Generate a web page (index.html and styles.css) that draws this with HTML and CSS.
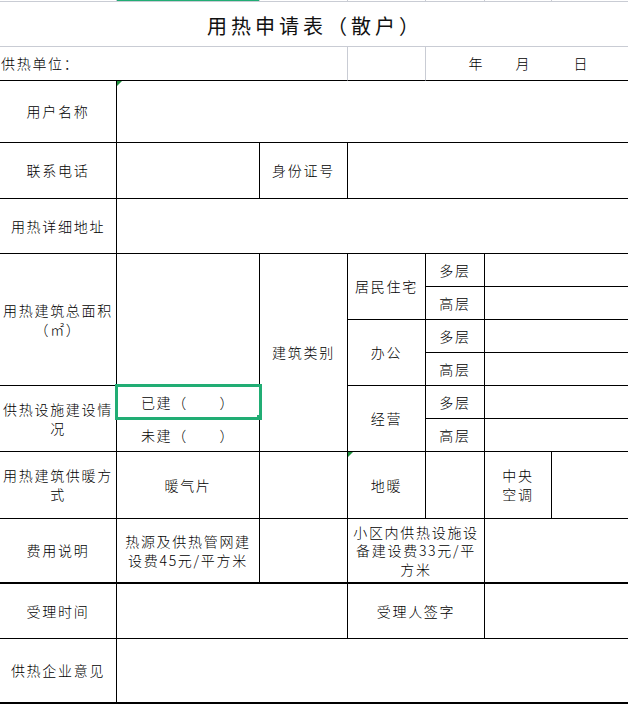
FILE: index.html
```html
<!DOCTYPE html>
<html lang="zh-CN">
<head>
<meta charset="utf-8">
<title>用热申请表（散户）</title>
<link rel="stylesheet" href="styles.css">
</head>
<body>
<table class="sheet">
  <colgroup>
    <col class="c-a"><col class="c-b"><col class="c-c"><col class="c-d"><col class="c-e"><col class="c-f"><col class="c-g">
  </colgroup>
  <tbody>
    <tr class="h-strip">
      <td class="strip"></td><td class="strip strip-sel"></td><td class="strip"></td><td class="strip"></td><td class="strip"></td><td class="strip"></td><td class="strip end"></td>
    </tr>
    <tr class="h-title">
      <td colspan="7" class="title end">用热申请表（散户）</td>
    </tr>
    <tr class="h-unit">
      <td colspan="3" class="unit">供热单位：</td>
      <td class="unit-mid"></td>
      <td colspan="3" class="unit-date end"><div class="date"><span class="d-year">年</span><span class="d-month">月</span><span class="d-day">日</span></div></td>
    </tr>
    <tr class="h-name">
      <td>用户名称</td>
      <td colspan="6" class="end flag"></td>
    </tr>
    <tr class="h-phone">
      <td>联系电话</td>
      <td></td>
      <td>身份证号</td>
      <td colspan="4" class="end"></td>
    </tr>
    <tr class="h-addr">
      <td>用热详细地址</td>
      <td colspan="6" class="end"></td>
    </tr>
    <tr class="h-sub">
      <td rowspan="4">用热建筑总面积<br>（㎡）</td>
      <td rowspan="4"></td>
      <td rowspan="6">建筑类别</td>
      <td rowspan="2">居民住宅</td>
      <td>多层</td>
      <td colspan="2" class="end"></td>
    </tr>
    <tr class="h-sub">
      <td>高层</td>
      <td colspan="2" class="end"></td>
    </tr>
    <tr class="h-sub">
      <td rowspan="2">办公</td>
      <td>多层</td>
      <td colspan="2" class="end"></td>
    </tr>
    <tr class="h-sub">
      <td>高层</td>
      <td colspan="2" class="end"></td>
    </tr>
    <tr class="h-sub">
      <td rowspan="2">供热设施建设情<br>况</td>
      <td class="sel">已建（　　）</td>
      <td rowspan="2">经营</td>
      <td>多层</td>
      <td colspan="2" class="end"></td>
    </tr>
    <tr class="h-sub">
      <td>未建（　　）</td>
      <td>高层</td>
      <td colspan="2" class="end"></td>
    </tr>
    <tr class="h-heat">
      <td>用热建筑供暖方<br>式</td>
      <td>暖气片</td>
      <td></td>
      <td class="flag">地暖</td>
      <td></td>
      <td>中央<br>空调</td>
      <td class="end"></td>
    </tr>
    <tr class="h-fee">
      <td class="thick">费用说明</td>
      <td class="thick">热源及供热管网建<br>设费45元/平方米</td>
      <td class="thick"></td>
      <td colspan="2" class="thick tight">小区内供热设施设<br>备建设费33元/平<br>方米</td>
      <td colspan="2" class="thick end"></td>
    </tr>
    <tr class="h-accept">
      <td>受理时间</td>
      <td colspan="2"></td>
      <td colspan="2">受理人签字</td>
      <td colspan="2" class="end"></td>
    </tr>
    <tr class="h-opinion">
      <td class="thick">供热企业意见</td>
      <td colspan="6" class="thick end"></td>
    </tr>
  </tbody>
</table>
</body>
</html>
```

FILE: styles.css
```css
* { box-sizing: border-box; }

html, body {
  margin: 0;
  padding: 0;
  background: #ffffff;
}

body {
  width: 628px;
  height: 704px;
  overflow: hidden;
  font-family: "Noto Sans CJK SC", "Noto Sans", sans-serif;
  font-size: 14px;
  font-weight: 300;
  color: #000000;
}

.sheet {
  border-collapse: separate;
  border-spacing: 0;
  table-layout: fixed;
  width: 628px;
}

.c-a { width: 117px; }
.c-b { width: 143px; }
.c-c { width: 88px; }
.c-d { width: 78px; }
.c-e { width: 59px; }
.c-f { width: 67px; }
.c-g { width: 76px; }

.sheet td {
  padding: 0;
  border-right: 1px solid #000000;
  border-bottom: 1px solid #000000;
  text-align: center;
  vertical-align: middle;
  letter-spacing: 1.7px;
  line-height: 19px;
  white-space: nowrap;
}

.sheet td.end { border-right: 0; }
.sheet td.thick { border-bottom-width: 2px; }
.sheet td.tight { line-height: 18.5px; }

/* row heights */
.h-strip { height: 2px; }
.h-title { height: 45px; }
.h-unit { height: 34px; }
.h-name { height: 62px; }
.h-phone { height: 56px; }
.h-addr { height: 55px; }
.h-sub { height: 33px; }
.h-heat { height: 67px; }
.h-fee { height: 65px; }
.h-accept { height: 55px; }
.h-opinion { height: 65px; }

/* top strip of column headers */
.sheet td.strip {
  border-right-color: #c9ccd4;
  border-bottom-color: #c9ccd4;
  line-height: 0;
  font-size: 0;
}
.sheet td.strip-sel { background: #21ad74; }

/* title */
.sheet td.title {
  border-bottom-color: #c9ccd4;
  font-size: 20px;
  font-weight: 400;
  letter-spacing: 4px;
  line-height: 24px;
  padding-top: 3px;
  padding-left: 2px;
  color: #111111;
}

/* unit / date row */
.sheet td.unit {
  text-align: left;
  padding-left: 1px;
  border-right-color: #c9ccd4;
}
.sheet td.unit-mid { border-right-color: #c9ccd4; }
.date {
  display: flex;
  padding-left: 42px;
  letter-spacing: 0;
}
.date span { width: 15px; text-align: center; }
.date .d-month { margin-left: 32px; }
.date .d-day { margin-left: 43px; }

/* green error flags */
.flag { position: relative; }
.flag::before {
  content: "";
  position: absolute;
  top: 0;
  left: 0;
  border-top: 5px solid #1e8f3c;
  border-right: 5px solid transparent;
}

/* selected cell */
.sel { position: relative; }
.sel::after {
  content: "";
  position: absolute;
  left: -2px;
  right: -3px;
  top: -2px;
  bottom: -2px;
  border: 3px solid #21ad74;
  z-index: 1;
}
.sel::before {
  content: "";
  position: absolute;
  right: -3px;
  bottom: -2px;
  width: 5px;
  height: 5px;
  background: #21ad74;
  z-index: 2;
}
```
